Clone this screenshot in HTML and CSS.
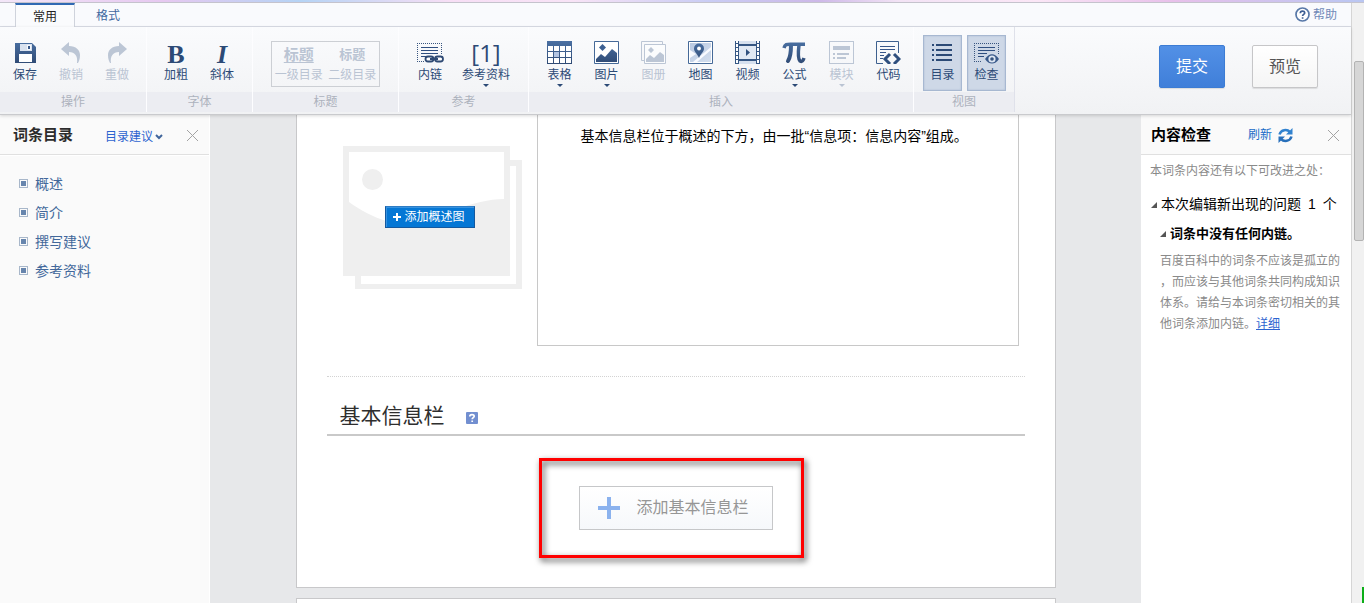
FILE: index.html
```html
<!DOCTYPE html>
<html lang="zh-CN">
<head>
<meta charset="utf-8">
<title>词条编辑</title>
<link rel="stylesheet" href="styles.css">
</head>
<body>
<svg class="defs" aria-hidden="true">
  <defs>
    <linearGradient id="navy" x1="0" y1="0" x2="0" y2="23" gradientUnits="userSpaceOnUse">
      <stop offset="0" stop-color="#4a70a3"/><stop offset="1" stop-color="#2f4a74"/>
    </linearGradient>
    <linearGradient id="pale" x1="0" y1="0" x2="1" y2="1">
      <stop offset="0" stop-color="#b9c9e2"/><stop offset="1" stop-color="#d3deee"/>
    </linearGradient>
  </defs>
</svg>
<div class="skyline"></div>
<div class="window">
  <div class="app">
    <nav class="tabs">
      <button class="tab tab-active" type="button">常用</button>
      <button class="tab" type="button">格式</button>
      <a class="help" href="#help">
        <svg width="15" height="15" viewBox="0 0 15 15"><circle cx="7.500" cy="7.500" r="6.500" fill="#fff" stroke="#5878a8" stroke-width="1.700"/><path d="M5.300 6.200C5.300 3.400 9.700 3.400 9.700 6C9.700 7.400 7.600 7.400 7.600 9M7.600 10.200V11.700" fill="none" stroke="#3e5f94" stroke-width="1.700"/></svg>
        <span>帮助</span>
      </a>
    </nav>

    <div class="ribbon">
      <section class="group group-edit">
        <div class="tools">
          <button class="tool" type="button">
            <svg class="icon" viewBox="0 0 25 23"><path d="M2 2H19L23 6V22H2Z" fill="url(#navy)"/><path d="M7 3H19V10H7Z" fill="#d9e2ef"/><path d="M14 4H18V9H14Z" fill="#f5f8fc"/><path d="M15 5H17V8H15Z" fill="#38588a"/><path d="M6 13H19V21H6Z" fill="#fff"/></svg>
            <span>保存</span>
          </button>
          <button class="tool" type="button" disabled>
            <svg class="icon" viewBox="0 0 25 23"><path d="M2 8L10 1V5C17 5 21 9 21 14C21 18 20 20 19 22H18C19 15 16 11 10 11V15Z" fill="#bcc6d5"/></svg>
            <span>撤销</span>
          </button>
          <button class="tool" type="button" disabled>
            <svg class="icon" viewBox="0 0 25 23"><path d="M22 8L14 1V5C7 5 3 9 3 14C3 18 4 20 5 22H6C5 15 8 11 14 11V15Z" fill="#bcc6d5"/></svg>
            <span>重做</span>
          </button>
        </div>
        <h2 class="group-name">操作</h2>
      </section>

      <section class="group group-font">
        <div class="tools">
          <button class="tool" type="button"><b class="letter">B</b><span>加粗</span></button>
          <button class="tool" type="button"><b class="letter letter-italic">I</b><span>斜体</span></button>
        </div>
        <h2 class="group-name">字体</h2>
      </section>

      <section class="group group-heading">
        <div class="tools">
          <div class="heading-box">
            <button class="heading" type="button" disabled><b class="heading-one">标题</b><span>一级目录</span></button>
            <button class="heading" type="button" disabled><b class="heading-two">标题</b><span>二级目录</span></button>
          </div>
        </div>
        <h2 class="group-name">标题</h2>
      </section>

      <section class="group group-reference">
        <div class="tools">
          <button class="tool" type="button">
            <svg class="icon icon-wide" viewBox="0 0 27 23"><path d="M0 2.500H25M0.500 2V22M24.500 2V14M0 20.500H8" fill="none" stroke="#38557f" stroke-dasharray="1 1" shape-rendering="crispEdges"/><path d="M4 6.500H21M4 9.500H21M4 12.500H21M4 15.500H9" stroke="#2f4f80"/><rect x="8.500" y="15.500" width="8" height="5" rx="2.500" fill="#fff" stroke="#2f4a74" stroke-width="1.800"/><rect x="18" y="15.500" width="8" height="5" rx="2.500" fill="#fff" stroke="#2f4a74" stroke-width="1.800"/><path d="M13 18H21" stroke="#2f4a74" stroke-width="2.200"/></svg>
            <span>内链</span>
          </button>
          <button class="tool tool-wide menu" type="button"><span class="citation">[1]</span><span>参考资料</span></button>
        </div>
        <h2 class="group-name">参考</h2>
      </section>

      <section class="group group-insert">
        <div class="tools">
          <button class="tool menu" type="button">
            <svg class="icon" viewBox="0 0 25 23" shape-rendering="crispEdges"><path d="M0 0H25V23H0Z" fill="url(#navy)"/><path d="M1 5H6V10H1ZM7 5H12V10H7ZM13 5H18V10H13ZM19 5H24V10H19ZM1 11H6V16H1ZM13 11H18V16H13ZM19 11H24V16H19ZM1 17H6V22H1ZM7 17H12V22H7ZM13 17H18V22H13ZM19 17H24V22H19Z" fill="#fff"/><path d="M7 11H12V16H7Z" fill="#b4c5e2"/></svg>
            <span>表格</span>
          </button>
          <button class="tool menu" type="button">
            <svg class="icon" viewBox="0 0 25 23"><path d="M.5.500H24.500V22.500H.5Z" fill="#fff" stroke="#456998"/><path d="M2 21V18L7 13L11 16L18 8L23 12V21Z" fill="url(#navy)"/><path d="M8.500 3L12 6.500L8.500 10L5 6.500Z" fill="#3d6092"/></svg>
            <span>图片</span>
          </button>
          <button class="tool" type="button" disabled>
            <svg class="icon" viewBox="0 0 25 23"><path d="M3 19.500H.5V.5H21.500V3" fill="none" stroke="#bcc6d5"/><path d="M3.500 3.500H24.500V22.500H3.500Z" fill="#fbfcfd" stroke="#bcc6d5"/><path d="M5 21V18L9 14L13 17L19 11L23 14V21ZM10 6L13 9L10 12L7 9Z" fill="#bcc6d5"/></svg>
            <span>图册</span>
          </button>
          <button class="tool" type="button">
            <svg class="icon" viewBox="0 0 25 23"><path d="M.5.500H24.500V22.500H.5Z" fill="#fff" stroke="#456998"/><path d="M2 2H23V21H2Z" fill="url(#pale)"/><path d="M2 17L8 13L2 9ZM5 21L23 6V9L9 21Z" fill="#f8faff"/><path d="M11 17C9 12 6 11 6 7.500A5 5 0 0 1 16 7.500C16 11 13 12 11 17Z" fill="url(#navy)"/><circle cx="11" cy="7.500" r="1.900" fill="#fff"/></svg>
            <span>地图</span>
          </button>
          <button class="tool" type="button">
            <svg class="icon" viewBox="0 0 25 23" shape-rendering="crispEdges"><path d="M0 0H25V23H0Z" fill="#fff"/><path d="M4 0H21V3H4ZM4 20H21V23H4Z" fill="#d7e1ef"/><path d="M4 5H21V18H4Z" fill="#e1e9f4"/><path d="M.5 0V23M3.500 0V23M21.500 0V23M24.500 0V23" stroke="#365784"/><path d="M2 0V23M23 0V23" stroke="#365784" stroke-width="2" stroke-dasharray="1 3" stroke-dashoffset="-2"/><path d="M4 4H21M4 19H21" stroke="#365784" stroke-width="2"/><path d="M11 8L15 11.500L11 15Z" fill="#2f507e" shape-rendering="auto"/></svg>
            <span>视频</span>
          </button>
          <button class="tool menu" type="button">
            <svg class="icon" viewBox="0 0 25 23"><path d="M2 7C3 3 5 3.200 9 3.200H23" fill="none" stroke="url(#navy)" stroke-width="3.500"/><path d="M9 4C9 12 8 17 6 20" fill="none" stroke="url(#navy)" stroke-width="4" stroke-linecap="round"/><path d="M17 4C16 12 16 18 18 20C20 21 21 20 22 17" fill="none" stroke="url(#navy)" stroke-width="3.500"/></svg>
            <span>公式</span>
          </button>
          <button class="tool menu" type="button" disabled>
            <svg class="icon" viewBox="0 0 25 23" shape-rendering="crispEdges"><path d="M.5.500H24.500V22.500H.5Z" fill="none" stroke="#bcc6d5"/><path d="M4 5H21V9H4ZM4 12H6V14H4ZM8 12H20V14H8ZM4 16H6V18H4ZM8 16H17V18H8Z" fill="#bcc6d5"/></svg>
            <span>模块</span>
          </button>
          <button class="tool" type="button">
            <svg class="icon" viewBox="0 0 25 23"><path d="M7 22.500H.5V.5H22.500V12" fill="none" stroke="#3d608f"/><path d="M4 5.500H19M4 8.500H19M4 11.500H10M4 14.500H8M4 17.500H7" stroke="#38578a"/><path d="M14 13L9 18L14 23M18 13L23 18L18 23" fill="none" stroke="#2f4f7e" stroke-width="3"/></svg>
            <span>代码</span>
          </button>
        </div>
        <h2 class="group-name">插入</h2>
      </section>

      <section class="group group-view">
        <div class="tools">
          <button class="tool tool-on" type="button" aria-pressed="true">
            <svg class="icon" viewBox="0 0 25 23" shape-rendering="crispEdges"><path d="M2 3H4V5H2ZM6 3H22V5H6ZM2 8H4V10H2ZM6 8H22V10H6ZM2 13H4V15H2ZM6 13H22V15H6ZM2 18H4V20H2ZM6 18H22V20H6Z" fill="#2c4a76"/></svg>
            <span>目录</span>
          </button>
          <button class="tool tool-on" type="button" aria-pressed="true">
            <svg class="icon" viewBox="0 0 25 23"><path d="M0 2.500H25M.5 2V22M24.500 2V14M0 20.500H8" fill="none" stroke="#38557f" stroke-dasharray="1 1" shape-rendering="crispEdges"/><path d="M4 6.500H21M4 9.500H21M4 12.500H13M4 15.500H10" stroke="#2f4f80"/><path d="M11 18C15 11.500 21 11.500 25 18C21 24 15 24 11 18Z" fill="#38598a"/><circle cx="18" cy="18" r="3.600" fill="#dce5f2"/><circle cx="18" cy="18" r="1.800" fill="#34537f"/></svg>
            <span>检查</span>
          </button>
        </div>
        <h2 class="group-name">视图</h2>
      </section>

      <div class="actions">
        <button class="action action-primary" type="button">提交</button>
        <button class="action" type="button">预览</button>
      </div>
    </div>

    <main class="workspace">
      <aside class="panel outline">
        <header class="panel-head outline-head">
          <h2 class="panel-title outline-title">词条目录</h2>
          <button class="suggest" type="button">目录建议<svg width="8" height="6" viewBox="0 0 8 6"><path d="M1 1L4 4L7 1" fill="none" stroke="#40659b" stroke-width="2"/></svg></button>
          <button class="close" type="button" aria-label="关闭目录"><svg width="13" height="13" viewBox="0 0 13 13"><path d="M1 1L12 12M12 1L1 12" stroke="#a3a3a3"/></svg></button>
        </header>
        <ul class="outline-list">
          <li><a href="#summary">概述</a></li>
          <li><a href="#intro">简介</a></li>
          <li><a href="#advice">撰写建议</a></li>
          <li><a href="#reference">参考资料</a></li>
        </ul>
      </aside>

      <div class="editor">
        <article class="sheet">
          <div class="summary">
            <div class="picture">
              <svg width="179" height="143" viewBox="0 0 179 143"><path d="M12 14H179V143H12Z" fill="#efefef"/><path d="M18 20H173V138H18Z" fill="#fff"/><path d="M0 0H167V130H0Z" fill="#efefef"/><path d="M6 6H161V53C146 53 130 57 112 64C91 73 66 83 43 75C30 71 17 64 6 56Z" fill="#fff"/><circle cx="29.500" cy="33.500" r="10.500" fill="#efefef"/></svg>
              <button class="add-picture" type="button"><svg width="8" height="8" viewBox="0 0 8 8"><path d="M4 0V8M0 4H8" stroke="#fff" stroke-width="2"/></svg>添加概述图</button>
            </div>
            <div class="summary-text"><p>基本信息栏位于概述的下方，由一批“信息项：信息内容”组成。</p></div>
          </div>
          <section class="info">
            <h2 class="info-title">基本信息栏
              <a class="tip" href="#tip" aria-label="说明"><svg width="12" height="12" viewBox="0 0 12 12"><rect width="12" height="12" rx="1" fill="#728fd0"/><path d="M3.800 4.500C3.800 2 8.200 2 8.200 4.300C8.200 5.700 6.200 5.600 6.200 7.300M6.200 8.500V10" fill="none" stroke="#fff" stroke-width="1.700"/></svg></a>
            </h2>
            <div class="add-row">
              <div class="marked">
                <button class="add-info" type="button"><svg width="22" height="22" viewBox="0 0 22 22"><path d="M11 0V22M0 11H22" stroke="#8bb2ee" stroke-width="4"/></svg>添加基本信息栏</button>
              </div>
            </div>
          </section>
        </article>
        <article class="sheet sheet-next"></article>
      </div>

      <aside class="panel check">
        <header class="panel-head check-head">
          <h2 class="panel-title">内容检查</h2>
          <button class="refresh" type="button">刷新<svg width="15" height="15" viewBox="0 0 15 15"><path d="M1.500 6.500C3 1.500 9 1 12 4" fill="none" stroke="#3182cf" stroke-width="2.500"/><path d="M14.500 0V6.500H8Z" fill="#3182cf"/><path d="M13.500 8.500C12 13.500 6 14 3 11" fill="none" stroke="#276fba" stroke-width="2.500"/><path d="M.5 15V8.500H7Z" fill="#276fba"/></svg></button>
          <button class="close" type="button" aria-label="关闭检查"><svg width="13" height="13" viewBox="0 0 13 13"><path d="M1 1L12 12M12 1L1 12" stroke="#a3a3a3"/></svg></button>
        </header>
        <div class="check-body">
          <p class="check-lead">本词条内容还有以下可改进之处：</p>
          <h3 class="issue-group">本次编辑新出现的问题<span class="count">1</span>个</h3>
          <div class="issue">
            <h4 class="issue-name">词条中没有任何内链。</h4>
            <p class="issue-text">百度百科中的词条不应该是孤立的，而应该与其他词条共同构成知识体系。请给与本词条密切相关的其他词条添加内链。<a href="#detail">详细</a></p>
          </div>
        </div>
      </aside>
    </main>
  </div>
  <div class="scrollbar"><div class="thumb"></div><div class="marker"></div></div>
</div>
</body>
</html>
```

FILE: styles.css
```css
* { box-sizing: border-box; }

body {
  margin: 0;
  height: 100vh;
  display: flex;
  flex-direction: column;
  overflow: hidden;
  background: #f8f9fc;
  color: #000;
  font: 12px/18px "Liberation Sans", "Noto Sans CJK SC", sans-serif;
}

h2, h3, h4, p, ul { margin: 0; padding: 0; font-weight: normal; font-size: inherit; }
ul { list-style: none; }
a { color: inherit; text-decoration: none; }
button { margin: 0; padding: 0; border: 0; background: none; color: inherit; font: inherit; white-space: nowrap; }
svg { display: block; flex: none; }
.defs { position: absolute; width: 0; height: 0; }

.skyline {
  flex: none;
  height: 3px;
  border-bottom: 1px solid #c5c3cd;
  background: linear-gradient(90deg, #f3e6f8, #e6c8f0 12%, #b5d3f5 22%, #f7def5 33%, #f8e3f6 42%, #c9ccf4 52%, #cdb8e8 60%, #f3e3f5 66%, #fbe6f6 76%, #e8c0ea 86%, #b9c6f2);
}

.window { flex: 1; display: flex; min-height: 0; }
.app { flex: 1; min-width: 0; display: flex; flex-direction: column; }

/* Tabs */
.tabs {
  flex: none;
  display: flex;
  height: 24px;
  padding-left: 15px;
  border-bottom: 1px solid #d9dce5;
  background: #f9fafd;
}
.tab { width: 60px; height: 24px; padding-top: 1px; color: #4268a0; }
.tab + .tab { margin-left: 3px; }
.tab-active {
  border: 1px solid #cfd3dc;
  border-top: 2px solid #3069b3;
  border-bottom: 0;
  background: #fafbfd;
  color: #222;
}
.help { display: flex; align-items: center; gap: 3px; margin-left: auto; padding-right: 14px; color: #7089b8; }

/* Ribbon */
.ribbon {
  position: relative;
  z-index: 1;
  flex: none;
  display: flex;
  height: 88px;
  border-bottom: 1px solid #c9cacd;
  background: linear-gradient(#fafbfd, #f1f2f4);
  box-shadow: 0 1px 3px rgba(0, 0, 0, .15);
}
.group { height: 85px; display: flex; flex-direction: column; border-right: 1px solid #fdfdff; }
.tools { flex: 1; display: flex; padding-top: 8px; }
.group-name { height: 20px; background: #ecedf2; color: #adb2bd; text-align: center; line-height: 21px; }
.group-edit { width: 147px; }
.group-edit .tools { padding-left: 2px; }
.group-font { width: 106px; }
.group-font .tools { padding-left: 6px; }
.group-heading { width: 146px; }
.group-heading .tools { padding: 14px 18px 5px; }
.group-reference { width: 130px; }
.group-reference .tools { padding-left: 8px; }
.group-insert { width: 385px; }
.group-insert .tools { padding-left: 7px; }
.group-view { width: 101px; border-right-color: #dfe1ea; }
.group-view .tools { padding-left: 9px; gap: 5px; }

.tool {
  position: relative;
  display: flex;
  flex-direction: column;
  align-items: center;
  width: 46px;
  height: 56px;
  padding-top: 6px;
  color: #2c4a76;
}
.group-insert .tool { width: 47px; }
.tool:disabled, .heading:disabled { color: #bac4d3; }
.tool > span:last-child { margin-top: 2px; }
.tool-wide { width: 66px; }
.group-view .tool { width: 39px; padding-top: 5px; border: 1px solid #a7b8d1; background: #ced8e7; box-shadow: inset 0 0 2px #a7b8d1; }
.icon { width: 25px; height: 23px; }
.icon-wide { width: 27px; }
.letter { height: 23px; font: bold 26px/28px "Liberation Serif", serif; }
.letter-italic { font-style: italic; }
.citation { height: 23px; font: 24px/23px "Open Sans", sans-serif; }
.menu::after {
  content: "";
  position: absolute;
  top: 49px;
  border: 3px solid transparent;
  border-top-color: currentColor;
  border-bottom: 0;
}

.heading-box { display: flex; width: 109px; height: 46px; border: 1px solid #cccfd4; }
.heading { flex: 1; display: flex; flex-direction: column; align-items: center; padding-top: 3px; }
.heading b { height: 21px; }
.heading-one { font-size: 15px; line-height: 20px; text-decoration: underline; text-underline-offset: 2px; }
.heading-two { font-size: 13px; line-height: 20px; }

.actions { display: flex; align-items: flex-start; gap: 27px; margin-left: auto; padding: 18px 33px 0 0; }
.action {
  width: 66px;
  height: 43px;
  border: 1px solid #c6c6c8;
  border-radius: 2px;
  background: linear-gradient(#fff, #f5f5f5);
  color: #555;
  font-size: 16px;
  box-shadow: 0 1px 1px rgba(0, 0, 0, .1);
}
.action-primary { border-color: #3c7cd4; background: linear-gradient(#5290e6, #407fd9); color: #fff; }

/* Workspace */
.workspace { flex: 1; display: flex; min-height: 0; background: #e7e8ea; }
.panel { flex: none; width: 210px; background: #fafafa; }
.panel-head { display: flex; align-items: center; height: 40px; padding-top: 1px; border-bottom: 1px solid #e0e0e0; }
.panel-title { font-size: 15px; font-weight: bold; line-height: 20px; }
.close { margin-left: auto; }

.outline { border-right: 1px solid #fff; }
.outline-head { padding-right: 10px; padding-left: 13px; }
.outline-title { width: 92px; color: #2c2c2c; }
.suggest { display: flex; align-items: center; gap: 2px; padding-top: 3px; color: #2d64d0; }
.outline-list { padding-top: 13px; border-top: 1px solid #fff; }
.outline-list li { display: flex; align-items: center; gap: 7px; height: 29px; padding-left: 19px; color: #42689b; font-size: 14px; }
.outline-list li::before {
  content: "";
  width: 7px;
  height: 7px;
  border: 1px solid #a8b7ca;
  background: #6785ad;
  box-shadow: inset 0 0 0 1px #fafafa;
}

.editor { flex: 1; display: flex; flex-direction: column; align-items: center; overflow: hidden; }
.sheet { flex: none; width: 760px; max-width: 100%; padding: 0 30px 57px; border: 1px solid #c8c8ca; border-top: 0; background: #fff; }
.sheet-next { height: 80px; margin-top: 10px; border-top: 1px solid #c8c8ca; }
.summary { display: flex; gap: 15px; height: 231px; padding: 0 6px 0 16px; }
.picture { position: relative; padding-top: 31px; }
.add-picture {
  position: absolute;
  top: 91px;
  left: 42px;
  display: flex;
  align-items: center;
  gap: 4px;
  width: 90px;
  height: 22px;
  padding-left: 7px;
  border: 1px solid #14599f;
  border-top-color: #2e7cc4;
  background: #0577d5;
  box-shadow: inset 1px 1px 0 #3792df;
  color: #fff;
}
.summary-text { flex: 1; padding: 11px 0 0 43px; border: 1px solid #c8c8c8; border-top: 0; font-size: 14px; line-height: 20px; }

.info { margin-top: 30px; border-top: 1px dotted #d3d3d3; }
.info-title {
  display: flex;
  align-items: center;
  gap: 21px;
  padding: 27px 0 6px 13px;
  border-bottom: 2px solid #c9c9c9;
  color: #2e2e2e;
  font-size: 21px;
  line-height: 24px;
}
.tip { padding-top: 4px; }
.add-row { display: flex; justify-content: center; padding-top: 50px; }
.marked { position: relative; }
.marked::after {
  content: "";
  position: absolute;
  inset: -28px -31px -28px -40px;
  border: 3px solid #f00;
  filter: drop-shadow(2px 3px 3px rgba(0, 0, 0, .75));
  pointer-events: none;
}
.add-info {
  display: flex;
  align-items: center;
  gap: 17px;
  width: 194px;
  height: 44px;
  padding-left: 18px;
  border: 1px solid #c6c7c9;
  background: linear-gradient(#fff, #f6f8fb);
  color: #969696;
  font-size: 16px;
}

/* Content check */
.check { background: #fff; }
.check-head { padding-right: 11px; padding-left: 10px; background: #fafafa; }
.refresh { display: flex; align-items: center; gap: 6px; margin-left: 37px; color: #176bc8; }
.check-body { padding: 7px 9px 0; }
.check-lead { color: #8a8a8a; white-space: nowrap; }
.issue-group, .issue-name { display: flex; align-items: center; gap: 4px; white-space: nowrap; }
.issue-group { gap: 0; margin-top: 14px; font-size: 14px; line-height: 20px; }
.issue-group::before, .issue-name::before {
  content: "";
  border: solid transparent;
  border-width: 0 0 6px 6px;
  border-bottom-color: #555;
}
.issue-group::before { margin: 2px 4px 0 1px; }
.count { margin: 0 7px; }
.issue { padding-left: 10px; }
.issue-name { margin-top: 10px; font-size: 13px; font-weight: bold; line-height: 20px; }
.issue-text { width: 181px; margin-top: 7px; color: #8a8a8a; line-height: 21px; line-break: anywhere; }
.issue-text a { color: #2d64d0; text-decoration: underline; }

/* Page scrollbar */
.scrollbar { position: relative; flex: none; width: 13px; border-left: 1px solid #d5d5d5; background: #f1f1f1; }
.thumb { height: 180px; margin: 58px 0 0 2px; border: 1px solid #b3b3b3; border-radius: 2px; background: #d6d6d6; }
.marker { position: absolute; right: 0; bottom: 0; width: 2px; height: 16px; background: #0cae18; }
```
